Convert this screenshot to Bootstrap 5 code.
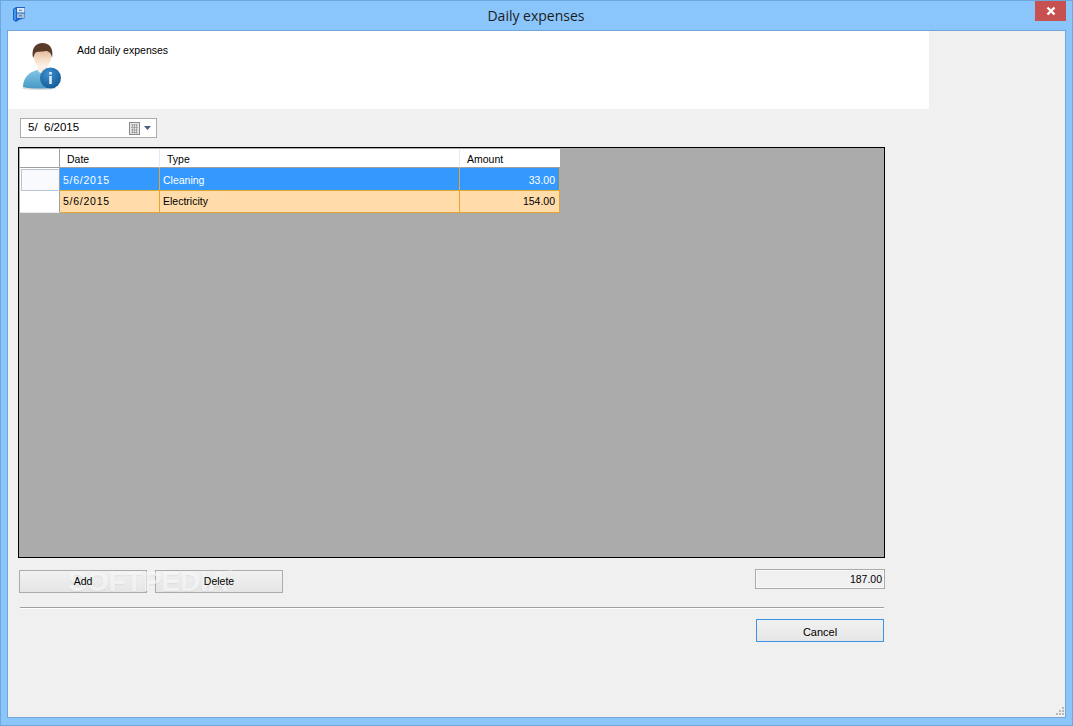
<!doctype html>
<html lang="en">
<head>
<meta charset="utf-8">
<title>Daily expenses</title>
<link href="https://cdn.jsdelivr.net/npm/bootstrap@5.3.0/dist/css/bootstrap.min.css" rel="stylesheet">
<style>
html,body{height:726px;overflow:hidden;background:#8ac6fb;}
body{font-family:"Liberation Sans",Arial,sans-serif;font-size:10.5px;color:#000;line-height:1.2;}
.win-frame{height:726px;width:1073px;border:1px solid #71a6dc;background:#8ac6fb;}
.win-title{height:29px;padding-left:10px;}
.win-title-text{font-family:"Open Sans",sans-serif;font-size:14px;line-height:30px;flex:1;text-align:center;color:#1c1c1c;padding-left:10px;}
.win-close{width:31px;height:20px;background:#c75050;margin-right:6px;}
.win-client{margin:0 6px 7px 6px;height:689px;border:1px solid #71a6dc;background:#f0f0f0;position:relative;}
.banner{width:921px;height:78px;background:#fff;padding-left:14px;}
.banner-avatar{margin-top:10px;}
.banner-text{margin:13px 0 0 15px;}
.date-pick{width:137px;height:20px;margin:9px 0 0 12px;border:1px solid #ababab;background:#fff;padding:0 5px 0 7px;font-size:11.5px;}
.grid-box{width:867px;height:411px;margin:9px 0 0 10px;border:1px solid #000;background:#ababab;padding-left:1px;padding-top:1px;}
.xp-table{border-collapse:separate;border-spacing:0;table-layout:fixed;width:540px;font-size:10.5px;}
.col-rh{width:40px}.col-date{width:100px}.col-type{width:300px}.col-amt{width:100px}
.xp-table th,.xp-table td{padding:0;font-weight:400;vertical-align:middle;white-space:nowrap;overflow:hidden;}
.xp-table thead th{height:19px;background:#fff;border-right:1px solid #e3ecf6;border-bottom:1px solid #a0a0a0;padding:2px 0 0 7px;}
.xp-table thead th.corner{border-right:1px solid #a0a0a0;padding:0;}
.xp-table thead th:last-child{border-right:0;}
.xp-table td{padding-left:3px;}
.xp-table td.rh{padding:0;background:#fff;border-right:1px solid #a0a0a0;}
.rh-sel{display:block;height:22px;width:38px;margin-left:1px;background:#f8fafd;border:1px solid #b9c4d4;border-right-color:#f0f3f8;}
.row-blue td{height:23px;}
.row-tan td{height:22px;}
.row-blue td.cell{background:#3399ff;color:#fff;border-right:1px solid #e3a632;border-bottom:1px solid #e3a632;padding-top:2px;}
.row-tan td.cell{background:#ffdcaa;color:#000;border-right:1px solid #e3a632;border-bottom:1px solid #e3a632;}
.row-tan td.rh{border-bottom:1px solid #e6ebf2;}
.xp-table td.num{text-align:right;padding-right:4px;}
.xp-table td.when{letter-spacing:.75px;}
.tool-row{width:866px;margin:11px 0 0 11px;height:24px;}
.xp-btn{height:23px;width:128px;background:linear-gradient(#f1f1f1,#e6e6e6);border:1px solid #acacac;border-radius:0;padding:0;font-size:10.5px;color:#000;line-height:21px;}
.xp-btn-label{position:relative;z-index:2;}
.xp-btn-next{margin-left:8px;}
.tool-btns{margin-top:1px;}
.total-box{width:130px;height:20px;border:1px solid #ababab;background:#f0f0f0;box-shadow:inset 0 0 0 1px #f8f8f8;text-align:right;padding-right:2px;font-size:10.5px;line-height:18px;}
.rule-line{width:864px;margin:14px 0 0 12px;height:2px;border-top:1px solid #a0a0a0;border-bottom:1px solid #fff;}
.btn-row{width:864px;margin:10px 0 0 12px;}
.btn-focus{border-color:#3c94e8;padding-top:2px;font-size:11px;}
.grip{position:absolute;right:1px;bottom:1px;}
.wm{position:absolute;z-index:1;left:60px;top:534px;font-family:"Liberation Sans",sans-serif;font-weight:700;font-size:28px;line-height:34px;color:rgba(255,255,255,.62);text-shadow:0 1px 2px rgba(0,0,0,.06);white-space:nowrap;}
.wm-r{font-size:7px;vertical-align:top;line-height:16px;font-weight:400;}
</style>
</head>
<body>
<div class="win-frame d-flex flex-column">
  <div class="win-title d-flex align-items-start">
    <svg width="16" height="18" viewBox="0 0 16 18" class="mt-1 flex-shrink-0" aria-hidden="true">
      <path d="M2 4 L5 2 H14 V13 L8 15 L5 17 L2 15Z" fill="#1e62c8"/>
      <path d="M3 4 H5 V15 H3Z" fill="#3f95ec"/>
      <rect x="6" y="3" width="7.500" height="4.500" fill="#dce8f4"/>
      <rect x="6" y="8.500" width="7.500" height="4.500" fill="#a9c0da"/>
      <rect x="8" y="4.800" width="3" height="1" fill="#5a7da8"/>
      <rect x="8" y="10.300" width="3" height="1" fill="#4f6f96"/>
    </svg>
    <div class="win-title-text">Daily expenses</div>
    <div class="win-close d-flex align-items-center justify-content-center">
      <svg width="10" height="10" viewBox="0 0 10 10" aria-hidden="true"><path d="M1.500 1.500 L8.500 8.500 M8.500 1.500 L1.500 8.500" stroke="#fff" stroke-width="2.400"/></svg>
    </div>
  </div>
  <div class="win-client">
    <div class="banner d-flex align-items-start">
      <svg class="banner-avatar flex-shrink-0" width="40" height="50" viewBox="0 0 40 50" aria-hidden="true">
        <defs>
          <linearGradient id="skin" x1="0" y1="0" x2="0" y2="1"><stop offset="0" stop-color="#d9a888"/><stop offset=".6" stop-color="#f6dcc6"/><stop offset="1" stop-color="#fdf5ee"/></linearGradient>
          <radialGradient id="info" cx=".4" cy=".3" r=".8"><stop offset="0" stop-color="#3f8fd0"/><stop offset="1" stop-color="#0f568f"/></radialGradient>
          <linearGradient id="shirt" x1="0" y1="0" x2="0" y2="1"><stop offset="0" stop-color="#82c6e6"/><stop offset="1" stop-color="#4799c4"/></linearGradient>
        </defs>
        <ellipse cx="17" cy="47" rx="17" ry="2" fill="#dcdcdc"/>
        <path d="M1 46 C1 36 8 31 15 29 H26 C31 31 34 36 34 46 C24 48 10 48 1 46Z" fill="url(#shirt)"/>
        <path d="M16 23 H25 V30 C23 33 18 33 16 30Z" fill="#fbeee2"/>
        <ellipse cx="20.500" cy="16" rx="8.500" ry="11" fill="url(#skin)"/>
        <path d="M11 17 C9 7 14 2 20.500 2 C27 2 32 7 30 17 C29 12 27 10 24 10 C20 11 15 10 13 12 C12.500 14 12 15 11 17Z" fill="#5a3b2a"/>
        <circle cx="28.500" cy="37" r="10.500" fill="url(#info)"/>
        <rect x="27.200" y="35" width="2.600" height="8" fill="#dcecf7"/>
        <rect x="27.200" y="31" width="2.600" height="2.600" fill="#dcecf7"/>
      </svg>
      <div class="banner-text">Add daily expenses</div>
    </div>
    <div class="date-pick d-flex align-items-center justify-content-between">
      <span>5/&nbsp; 6/2015</span>
      <span class="d-flex align-items-center gap-1">
        <svg width="11" height="13" viewBox="0 0 11 13" aria-hidden="true"><rect x=".5" y=".5" width="10" height="12" fill="#e8e8e8" stroke="#8a8a8a"/><path d="M2 3H9M2 5.500H9M2 8H9M2 10.500H9M3.500 2V11.500M5.500 2V11.500M7.500 2V11.500" stroke="#9a9a9a" stroke-width=".8"/></svg>
        <svg width="7" height="4" viewBox="0 0 7 4" aria-hidden="true"><path d="M0 0H7L3.500 4Z" fill="#4a5f7f"/></svg>
      </span>
    </div>
    <div class="grid-box">
      <table class="xp-table">
        <colgroup><col class="col-rh"><col class="col-date"><col class="col-type"><col class="col-amt"></colgroup>
        <thead>
          <tr><th class="corner"></th><th>Date</th><th>Type</th><th>Amount</th></tr>
        </thead>
        <tbody>
          <tr class="row-blue"><td class="rh"><span class="rh-sel"></span></td><td class="cell when">5/6/2015</td><td class="cell">Cleaning</td><td class="cell num">33.00</td></tr>
          <tr class="row-tan"><td class="rh"></td><td class="cell when">5/6/2015</td><td class="cell">Electricity</td><td class="cell num">154.00</td></tr>
        </tbody>
      </table>
    </div>
    <div class="tool-row d-flex justify-content-between align-items-start">
      <div class="d-flex tool-btns">
        <button type="button" class="xp-btn"><span class="xp-btn-label">Add</span></button>
        <button type="button" class="xp-btn xp-btn-next"><span class="xp-btn-label">Delete</span></button>
      </div>
      <div class="total-box">187.00</div>
    </div>
    <div class="rule-line"></div>
    <div class="btn-row d-flex justify-content-end">
      <button type="button" class="xp-btn btn-focus">Cancel</button>
    </div>
    <div class="wm">SOFTPEDIA<span class="wm-r">®</span></div>
    <svg class="grip" width="9" height="9" viewBox="0 0 9 9" aria-hidden="true"><path d="M7 0h2v2H7zM4 3h2v2H4zM7 3h2v2H7zM1 6h2v2H1zM4 6h2v2H4zM7 6h2v2H7z" fill="#b8b8b8"/></svg>
  </div>
</div>
</body>
</html>
